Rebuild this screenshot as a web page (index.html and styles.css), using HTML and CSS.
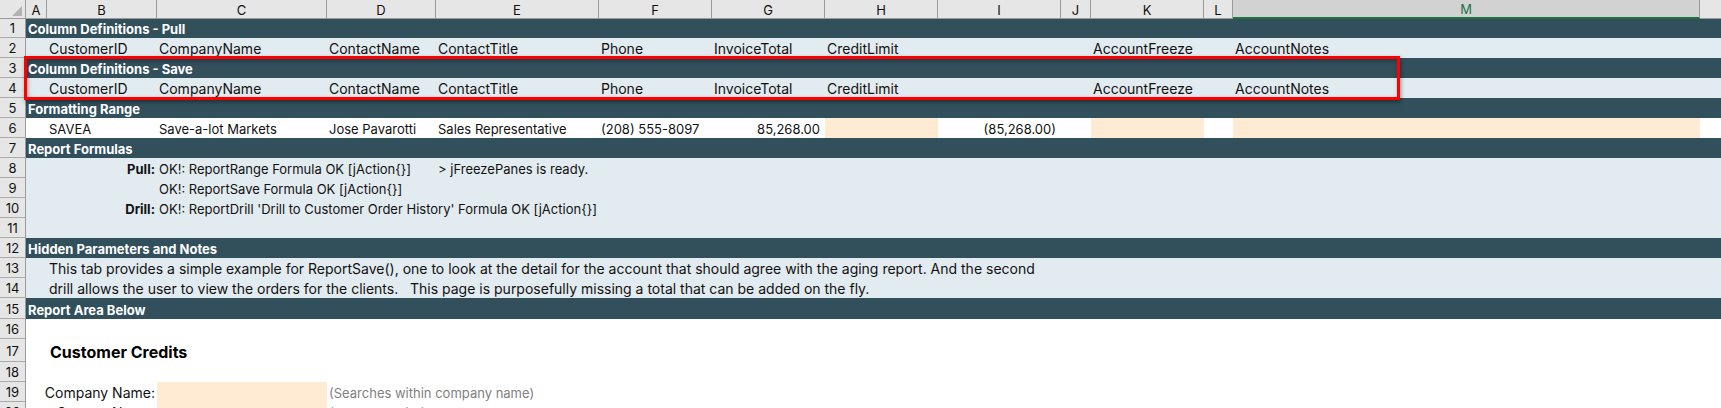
FILE: index.html
```
<!DOCTYPE html>
<html lang="en">
<head>
<meta charset="utf-8">
<title>Customer Credits</title>
<link rel="stylesheet" href="styles.css">
</head>
<body>
<main class="workbook">
<table class="sheet">
<colgroup>
<col class="w-head"><col class="w-a"><col class="w-b"><col class="w-c"><col class="w-d"><col class="w-e"><col class="w-f"><col class="w-f"><col class="w-f"><col class="w-i"><col class="w-j"><col class="w-f"><col class="w-l"><col class="w-m"><col>
</colgroup>
<thead>
<tr class="letters"><th class="corner"><svg width="12" height="12" viewBox="0 0 12 12" aria-hidden="true"><path d="M11 1v10H1z" fill="#b3b3b3"/></svg></th><th>A</th><th>B</th><th>C</th><th>D</th><th>E</th><th>F</th><th>G</th><th>H</th><th>I</th><th>J</th><th>K</th><th>L</th><th class="selected">M</th><th class="rest"></th></tr>
</thead>
<tbody>
<tr class="band first"><th>1</th><td colspan="14">Column Definitions - Pull</td></tr>
<tr class="tint wide"><th>2</th><td></td><td>CustomerID</td><td>CompanyName</td><td>ContactName</td><td>ContactTitle</td><td>Phone</td><td>InvoiceTotal</td><td>CreditLimit</td><td></td><td></td><td>AccountFreeze</td><td></td><td>AccountNotes</td><td></td></tr>
<tr class="band"><th>3</th><td colspan="14">Column Definitions - Save</td></tr>
<tr class="tint wide"><th>4</th><td></td><td>CustomerID</td><td>CompanyName</td><td>ContactName</td><td>ContactTitle</td><td>Phone</td><td>InvoiceTotal</td><td>CreditLimit</td><td></td><td></td><td>AccountFreeze</td><td></td><td>AccountNotes</td><td></td></tr>
<tr class="band"><th>5</th><td colspan="14">Formatting Range</td></tr>
<tr><th>6</th><td></td><td>SAVEA</td><td>Save-a-lot Markets</td><td>Jose Pavarotti</td><td>Sales Representative</td><td>(208) 555-8097</td><td class="number">85,268.00</td><td class="entry"></td><td class="number">(85,268.00)</td><td></td><td class="entry"></td><td></td><td class="entry"></td><td></td></tr>
<tr class="band"><th>7</th><td colspan="14">Report Formulas</td></tr>
<tr class="tint"><th>8</th><td></td><td class="label strong">Pull:</td><td colspan="2">OK!: ReportRange Formula OK [jAction{}]</td><td colspan="10">&gt; jFreezePanes is ready.</td></tr>
<tr class="tint"><th>9</th><td></td><td></td><td colspan="12">OK!: ReportSave Formula OK [jAction{}]</td></tr>
<tr class="tint"><th>10</th><td></td><td class="label strong">Drill:</td><td colspan="12">OK!: ReportDrill 'Drill to Customer Order History' Formula OK [jAction{}]</td></tr>
<tr class="tint"><th>11</th><td colspan="14"></td></tr>
<tr class="band"><th>12</th><td colspan="14">Hidden Parameters and Notes</td></tr>
<tr class="tint wide"><th>13</th><td></td><td colspan="13">This tab provides a simple example for ReportSave(), one to look at the detail for the account that should agree with the aging report. And the second</td></tr>
<tr class="tint wide"><th>14</th><td></td><td colspan="13">drill allows the user to view the orders for the clients. &nbsp; This page is purposefully missing a total that can be added on the fly.</td></tr>
<tr class="band last"><th>15</th><td colspan="14">Report Area Below</td></tr>
<tr><th>16</th><td colspan="14"></td></tr>
<tr class="tall"><th>17</th><td></td><td class="title" colspan="13">Customer Credits</td></tr>
<tr><th>18</th><td colspan="14"></td></tr>
<tr class="wide"><th>19</th><td class="label" colspan="2">Company Name:</td><td class="entry"></td><td class="hint" colspan="11">(Searches within company name)</td></tr>
<tr class="wide"><th>20</th><td class="label" colspan="2">Contact Name:</td><td class="entry"></td><td class="hint" colspan="11">(Searches within contact name)</td></tr>
</tbody>
</table>
<div class="callout"></div>
</main>
</body>
</html>
```
FILE: styles.css
```
body {
  margin: 0;
  height: 100vh;
  overflow: hidden;
  background: #fff;
  color: #111;
  font-family: "Century Gothic", "URW Gothic", Inter, sans-serif;
  font-size: 13px;
  line-height: 18px;
}
.workbook { position: relative; }
.sheet {
  width: 100%;
  table-layout: fixed;
  border-collapse: separate;
  border-spacing: 0;
}
.w-head { width: 26px; }
.w-a { width: 21px; }
.w-b { width: 110px; }
.w-c { width: 170px; }
.w-d { width: 109px; }
.w-e { width: 163px; }
.w-f { width: 113px; }
.w-i { width: 123px; }
.w-j { width: 30px; }
.w-l { width: 29px; }
.w-m { width: 467px; }

.sheet th, .sheet td {
  box-sizing: border-box;
  height: 20px;
  padding: 2px 2px 0;
  white-space: nowrap;
  text-align: left;
  vertical-align: middle;
}
.sheet th {
  padding: 1px 0 0;
  background: #e6e6e6;
  border-right: 1px solid #9b9b9b;
  border-bottom: 1px solid #ababab;
  font-weight: 400;
  text-align: center;
}
.sheet .letters th {
  height: 19px;
  line-height: 16px;
  padding-top: 2px;
  border-bottom-color: #9b9b9b;
}
.letters .corner svg { display: block; margin: 2px 2px 0 auto; }
.sheet .letters .selected {
  padding-top: 1px;
  background: #d2d2d2;
  border-bottom: 2px solid #217346;
  color: #217346;
}
.sheet .letters .rest { border-right: 0; }
.sheet .first th, .sheet .first td { height: 19px; line-height: 17px; }
.band td {
  background: #324f5c;
  color: #fff;
  font-weight: 700;
}
.tint td { background: #e2ebf0; }
.wide td { font-size: 14px; }
.sheet .last th, .sheet .last td { height: 21px; }
.sheet .tall th, .sheet .tall td { height: 23px; }
.sheet .entry { background: #ffead3; }
.sheet .number { text-align: right; padding-right: 5px; }
.sheet .label { text-align: right; }
.strong { font-weight: 700; }
.sheet .title { font-size: 16px; font-weight: 700; padding-left: 3px; color: #000; }
.sheet .hint { font-size: 13px; color: #7f7f7f; }
.callout {
  position: absolute;
  top: 56px;
  left: 24px;
  width: 1376px;
  height: 44px;
  box-sizing: border-box;
  border: 3px solid #f00;
  box-shadow: 1px 2px 4px rgba(0, 0, 0, .4), inset 1px 2px 4px rgba(0, 0, 0, .3);
}
```
